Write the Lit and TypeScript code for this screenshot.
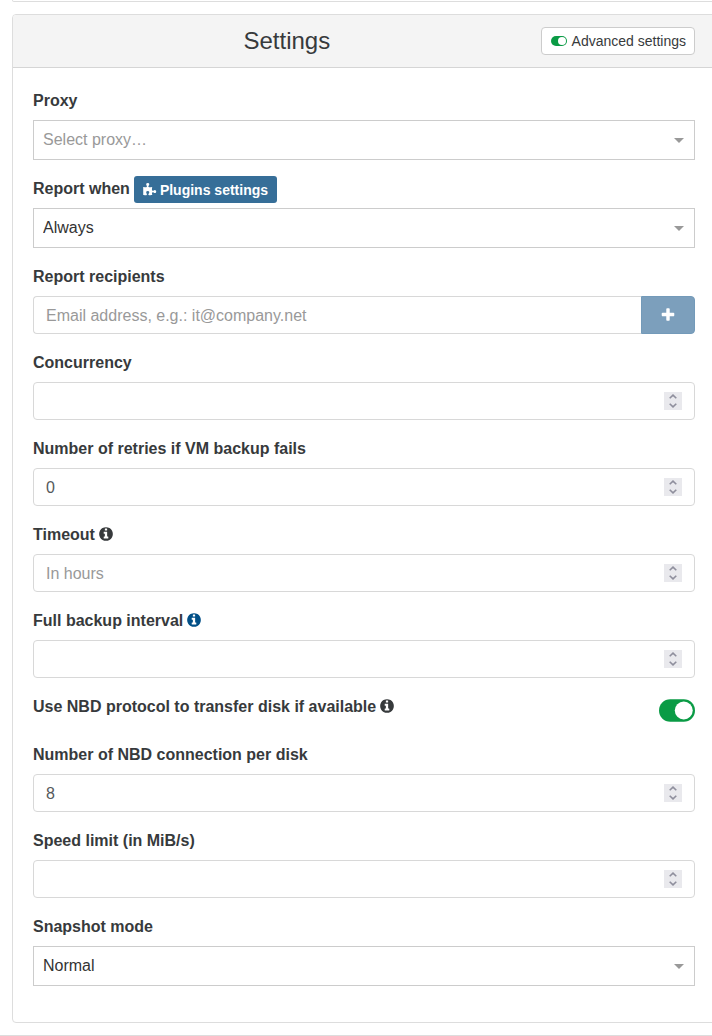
import { LitElement, html, css, svg, nothing } from "lit";
import { customElement, property } from "lit/decorators.js";

const INFO =
  "M1152 1376v-160q0-14-9-23t-23-9h-96v-512q0-14-9-23t-23-9h-320q-14 0-23 9t-9 23v160q0 14 9 23t23 9h96v320h-96q-14 0-23 9t-9 23v160q0 14 9 23t23 9h448q14 0 23-9t9-23zm-128-896v-160q0-14-9-23t-23-9h-192q-14 0-23 9t-9 23v160q0 14 9 23t23 9h192q14 0 23-9t9-23zm640 416q0 209-103 385.5t-279.5 279.5-385.5 103-385.5-103-279.5-279.5-103-385.5 103-385.5 279.5-279.5 385.5-103 385.5 103 279.5 279.5 103 385.5z";
const PLUS =
  "M1600 736v192q0 40-28 68t-68 28h-416v416q0 40-28 68t-68 28h-192q-40 0-68-28t-28-68v-416h-416q-40 0-68-28t-28-68v-192q0-40 28-68t68-28h416v-416q0-40 28-68t68-28h192q40 0 68 28t28 68v416h416q40 0 68 28t28 68z";
const PUZZLE =
  "M1755 1099q0 81-44.5 135t-123.5 54q-41 0-77.5-17.5t-59-38-56.5-38-71-17.5q-110 0-110 124 0 39 16 115t15 115v5q-22 0-33 1-34 3-97.5 11.5t-115.5 13.5-98 5q-61 0-103-26.5t-42-83.5q0-37 17.5-71t38-56.5 38-59 17.5-77.5q0-79-54-123.5t-135-44.5q-84 0-143 45.5t-59 127.5q0 43 15 83t33.5 64.5 33.5 53 15 50.5q0 45-46 89-37 35-117 35-95 0-245-24-9-2-27.5-4t-27.5-4l-13-2q-1 0-3-1-2 0-2-1v-1024q2 1 17.5 3.5t34 5 21.5 3.5q150 24 245 24 80 0 117-35 46-44 46-89 0-22-15-50.5t-33.5-53-33.5-64.5-15-83q0-82 59-127.5t144-45.5q80 0 134 44.5t54 123.5q0 41-17.5 77.5t-38 59-38 56.5-17.5 71q0 57 42 83.5t103 26.5q64 0 180-15t163-17v2q-1 2-3.5 17.5t-5 34-3.5 21.5q-24 150-24 245 0 80 35 117 44 46 89 46 22 0 50.5-15t53-33.5 64.5-33.5 83-15q82 0 127.5 59t45.5 143z";

const glyph = (path: string, cls: string) => html`
  <svg class=${cls} viewBox="0 0 1792 1792" aria-hidden="true">${svg`<path d=${path} />`}</svg>
`;

const toggleOn = (cls: string) => html`
  <svg class=${cls} viewBox="0 0 2048 1280" aria-hidden="true">
    <rect width="2048" height="1280" rx="640" fill="#0a9b45" />
    <circle cx="1408" cy="640" r="512" fill="#fff" />
  </svg>
`;

const shared = css`
  * {
    box-sizing: border-box;
  }
  .label {
    display: flex;
    align-items: center;
    gap: 4px;
    height: 24px;
    font-weight: bold;
  }
  .info {
    width: 16px;
    height: 16px;
    margin: 0 0 2px -1px;
    fill: #373a3c;
  }
  .info-blue {
    fill: #014f87;
  }
  input,
  select,
  button {
    margin: 0;
    font-family: inherit;
    font-size: 16px;
    color: inherit;
  }
  input::placeholder {
    color: #999;
    opacity: 1;
  }
`;

@customElement("number-field")
export class NumberField extends LitElement {
  @property() label = "";
  @property() value = "";
  @property() placeholder = "";
  @property() info = "";

  static styles = [
    shared,
    css`
      :host {
        display: flex;
        flex-direction: column;
        gap: 7px;
      }
      .box {
        display: flex;
        align-items: center;
        height: 38px;
        padding: 0 12px;
        border: 1px solid #d8d8d8;
        border-radius: 4px;
        background: #fff;
      }
      .number {
        flex: 1;
        min-width: 0;
        padding: 2px 0 0;
        border: 0;
        outline: 0;
        background: none;
        line-height: 24px;
        color: #55595c;
        appearance: textfield;
      }
      .number::-webkit-inner-spin-button {
        appearance: none;
      }
      .spinner {
        display: flex;
        flex-direction: column;
        width: 18px;
        height: 18px;
        background: #e9e9ed;
      }
      .step {
        flex: 1;
        display: flex;
        align-items: center;
        justify-content: center;
        min-height: 0;
        padding: 0;
        border: 0;
        background: none;
      }
      .chevron {
        display: block;
        width: 8px;
        height: 5px;
        fill: none;
        stroke: #8f8f9d;
        stroke-width: 1.6;
      }
    `,
  ];

  private step(delta: number) {
    this.value = String(Number(this.value || 0) + delta);
  }

  render() {
    return html`
      <label class="label" for="number">
        ${this.label}
        ${this.info ? glyph(INFO, this.info === "blue" ? "info info-blue" : "info") : nothing}
      </label>
      <div class="box">
        <input class="number" id="number" type="number" .value=${this.value} placeholder=${this.placeholder} />
        <div class="spinner">
          <button class="step" type="button" tabindex="-1" aria-label="Increase" @click=${() => this.step(1)}>
            <svg class="chevron" viewBox="0 0 8 5"><path d="M0.7 4.3 4 1.1 7.3 4.3" /></svg>
          </button>
          <button class="step" type="button" tabindex="-1" aria-label="Decrease" @click=${() => this.step(-1)}>
            <svg class="chevron" viewBox="0 0 8 5"><path d="M0.7 0.7 4 3.9 7.3 0.7" /></svg>
          </button>
        </div>
      </div>
    `;
  }
}

@customElement("select-field")
export class SelectField extends LitElement {
  @property() label = "";
  @property({ type: Array }) options: string[] = [];
  @property() placeholder = "";

  static styles = [
    shared,
    css`
      :host {
        display: flex;
        flex-direction: column;
        gap: 7px;
      }
      .box {
        display: grid;
        grid-template-columns: 1fr 26px;
        align-items: center;
      }
      .select {
        grid-area: 1 / 1 / 2 / 3;
        width: 100%;
        height: 40px;
        padding: 0 26px 2px 9px;
        border: 1px solid #ccc;
        border-radius: 0;
        background: #fff;
        appearance: none;
        color: #333;
      }
      .empty {
        color: #999;
      }
      .arrow {
        grid-area: 1 / 2 / 2 / 3;
        width: 10px;
        height: 5px;
        margin-left: 5px;
        fill: #999;
        pointer-events: none;
      }
    `,
  ];

  render() {
    return html`
      <div class="label">
        <label for="select">${this.label}</label>
        <slot></slot>
      </div>
      <div class="box">
        <select class=${this.placeholder ? "select empty" : "select"} id="select">
          ${this.placeholder ? html`<option value="">${this.placeholder}</option>` : nothing}
          ${this.options.map((option) => html`<option>${option}</option>`)}
        </select>
        <svg class="arrow" viewBox="0 0 10 5" aria-hidden="true"><path d="M0 0h10l-5 5z" /></svg>
      </div>
    `;
  }
}

@customElement("app-root")
export class AppRoot extends LitElement {
  static styles = [
    shared,
    css`
      :host {
        display: block;
        overflow: hidden;
        font-family: "Liberation Sans", Arial, sans-serif;
        font-size: 16px;
        line-height: 24px;
        color: #373a3c;
        background: #fff;
      }
      .page {
        display: flex;
        flex-direction: column;
        gap: 12px;
        padding: 0 0 12px 12px;
        border-bottom: 1px solid #ddd;
      }
      .card {
        margin-right: -4px;
        border: 1px solid #ddd;
        border-radius: 4px;
        background: #fff;
      }
      .previous {
        height: 2px;
        border-top: 0;
        border-radius: 0 0 4px 4px;
      }
      .header {
        display: flex;
        align-items: center;
        padding: 12px 20px;
        border-bottom: 1px solid #d5d5d5;
        border-radius: 3px 3px 0 0;
        background: #f4f4f4;
      }
      .title {
        flex: 1;
        margin: 0;
        text-align: center;
        font-size: 24px;
        font-weight: normal;
        line-height: 28px;
      }
      .advanced {
        display: flex;
        align-items: center;
        gap: 5px;
        height: 28px;
        padding: 0 8px 0 9px;
        border: 1px solid #ccc;
        border-radius: 4px;
        background: #fff;
        font-size: 14px;
      }
      .toggle-small {
        width: 16px;
        height: 10px;
      }
      .body {
        display: flex;
        flex-direction: column;
        gap: 17px;
        padding: 21px 20px 36px;
      }
      .plugins {
        display: flex;
        align-items: center;
        gap: 3px;
        height: 27px;
        margin: -1px 0 -2px;
        padding: 0 9px 0 8px;
        border-radius: 3px;
        background: #366e98;
        color: #fff;
        font-size: 14px;
        font-weight: bold;
        text-decoration: none;
      }
      .puzzle {
        width: 15px;
        height: 14px;
        fill: #fff;
      }
      .group {
        display: flex;
        flex-direction: column;
        gap: 7px;
      }
      .recipients {
        display: flex;
        height: 38px;
      }
      .email {
        flex: 1;
        min-width: 0;
        padding: 2px 12px 0;
        border: 1px solid #d8d8d8;
        border-right: 0;
        border-radius: 4px 0 0 4px;
        background: #fff;
      }
      .add {
        display: flex;
        align-items: center;
        justify-content: center;
        width: 54px;
        padding: 0;
        border: 1px solid #739ab9;
        border-radius: 0 4px 4px 0;
        background: #7c9fbc;
      }
      .plus {
        width: 16px;
        height: 16px;
        fill: #fff;
      }
      .switch-row {
        display: flex;
        align-items: center;
        justify-content: space-between;
        height: 31px;
      }
      .switch-row .label {
        align-self: flex-start;
      }
      .switch {
        display: grid;
        align-items: center;
      }
      .switch-input {
        grid-area: 1 / 1;
        width: 36px;
        height: 23px;
        opacity: 0;
      }
      .toggle-large {
        grid-area: 1 / 1;
        width: 36px;
        height: 23px;
        pointer-events: none;
      }
    `,
  ];

  render() {
    return html`
      <main class="page">
        <div class="card previous"></div>
        <section class="card">
          <header class="header">
            <h1 class="title">Settings</h1>
            <button class="advanced" type="button">${toggleOn("toggle-small")}Advanced settings</button>
          </header>
          <form class="body">
            <select-field label="Proxy" placeholder="Select proxy…"></select-field>
            <select-field label="Report when" .options=${["Always"]}>
              <a class="plugins" href="#">${glyph(PUZZLE, "puzzle")}Plugins settings</a>
            </select-field>
            <div class="group">
              <label class="label" for="email">Report recipients</label>
              <div class="recipients">
                <input class="email" id="email" type="email" placeholder="Email address, e.g.: it@company.net" />
                <button class="add" type="button" aria-label="Add recipient">${glyph(PLUS, "plus")}</button>
              </div>
            </div>
            <number-field label="Concurrency"></number-field>
            <number-field label="Number of retries if VM backup fails" value="0"></number-field>
            <number-field label="Timeout" placeholder="In hours" info="dark"></number-field>
            <number-field label="Full backup interval" info="blue"></number-field>
            <div class="switch-row">
              <label class="label" for="nbd">
                Use NBD protocol to transfer disk if available ${glyph(INFO, "info")}
              </label>
              <div class="switch">
                <input class="switch-input" id="nbd" type="checkbox" role="switch" checked />
                ${toggleOn("toggle-large")}
              </div>
            </div>
            <number-field label="Number of NBD connection per disk" value="8"></number-field>
            <number-field label="Speed limit (in MiB/s)"></number-field>
            <select-field label="Snapshot mode" .options=${["Normal"]}></select-field>
          </form>
        </section>
      </main>
    `;
  }
}
